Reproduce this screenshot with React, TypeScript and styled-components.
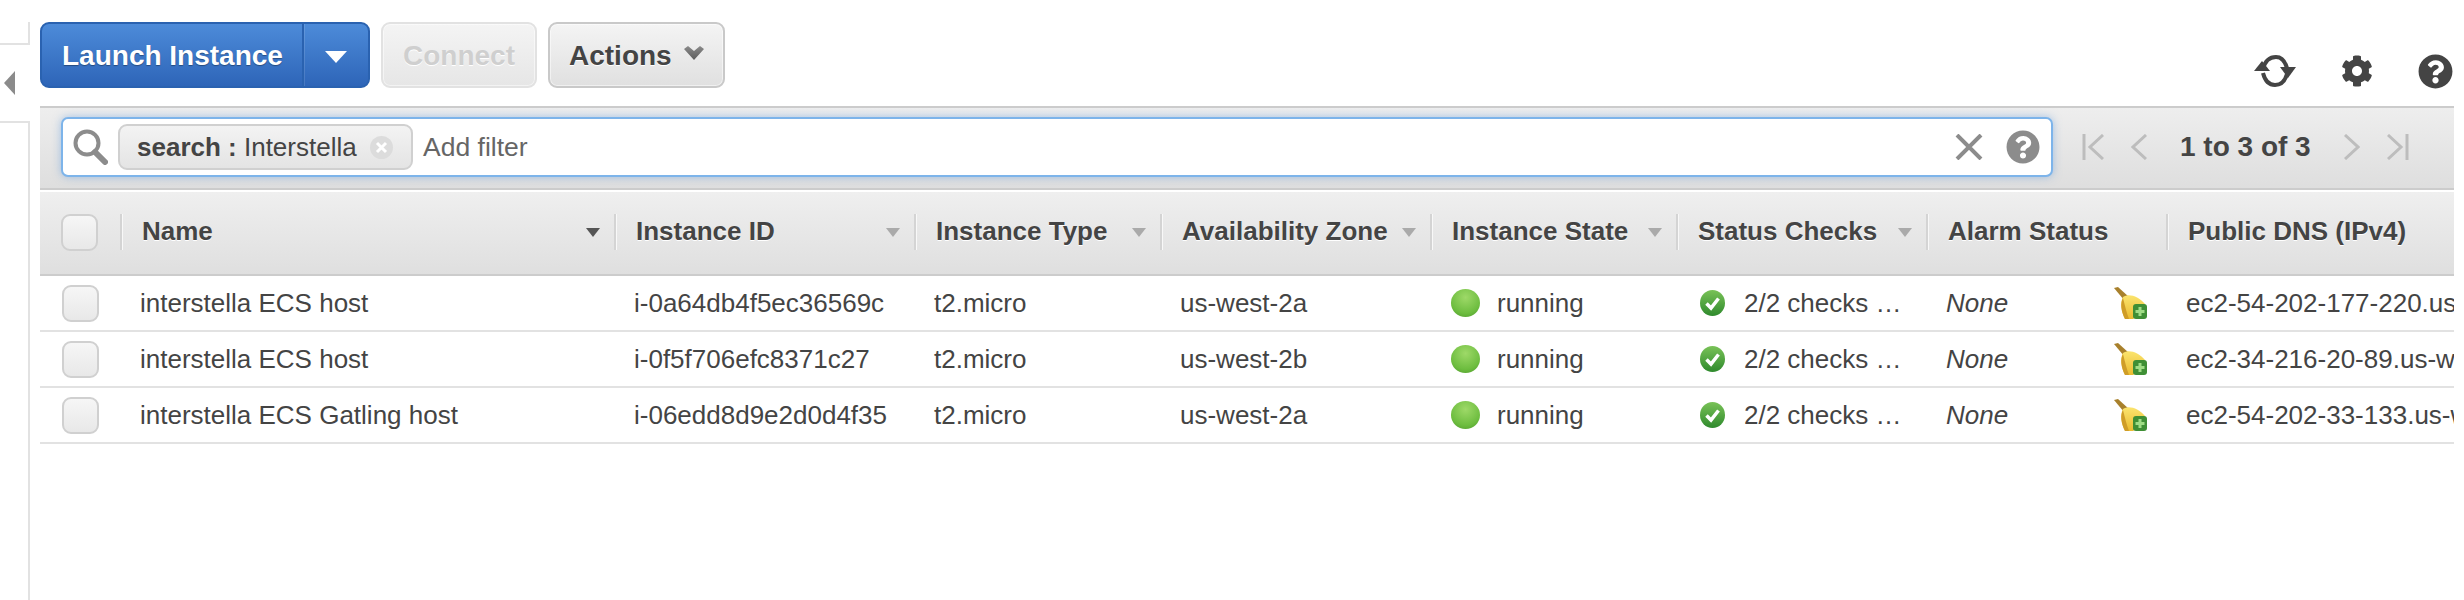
import React from "react";
import styled, { createGlobalStyle } from "styled-components";
import { FaCog, FaQuestionCircle } from "react-icons/fa";

const Global = createGlobalStyle`
  html, body { margin: 0; padding: 0; background: #fff; }
  body { font-family: "Liberation Sans", Arial, sans-serif; color: #444; overflow: hidden; }
`;

const Page = styled.div`
  display: flex;
  width: 2464px;
  height: 600px;
  overflow: hidden;
`;

const Side = styled.aside`
  display: flex;
  flex-direction: column;
  flex: 0 0 30px;
  padding-top: 22px;
  margin-right: 10px;
`;
const SideTop = styled.div`
  box-sizing: border-box;
  height: 23px;
  border-right: 2px solid #e2e2e2;
  border-bottom: 2px solid #e2e2e2;
`;
const SideHandle = styled.div`
  display: flex;
  align-items: center;
  height: 76px;
  padding-left: 4px;
`;
const SideArrow = styled.span`
  width: 0;
  height: 0;
  border-top: 12px solid transparent;
  border-bottom: 12px solid transparent;
  border-right: 11px solid #8b8b8b;
`;
const SideBottom = styled.div`
  flex: 1;
  border-top: 2px solid #e2e2e2;
  border-right: 2px solid #e2e2e2;
`;

const Main = styled.main`
  flex: 1;
  min-width: 0;
  padding: 22px 10px 0 0;
`;

const Toolbar = styled.div`
  display: flex;
  height: 66px;
  margin-bottom: 18px;
`;
const Split = styled.div`
  box-sizing: border-box;
  display: flex;
  width: 330px;
  margin-right: 11px;
  border: 2px solid #2a62b0;
  border-radius: 9px;
  background: linear-gradient(#4d8bd9, #2e65b8);
  overflow: hidden;
`;
const LaunchLabel = styled.div`
  flex: 0 0 262px;
  box-sizing: border-box;
  display: flex;
  align-items: center;
  padding: 2px 0 0 20px;
  font-size: 28px;
  font-weight: 700;
  color: #fff;
  text-shadow: 0 1px 1px rgba(0, 0, 0, 0.35);
  border-right: 2px solid #2a62b0;
  box-shadow: 1px 0 0 rgba(255, 255, 255, 0.12);
`;
const LaunchCaret = styled.div`
  flex: 1;
  display: flex;
  align-items: center;
  justify-content: center;
  padding-top: 3px;
  &::before {
    content: "";
    border-left: 11px solid transparent;
    border-right: 11px solid transparent;
    border-top: 12px solid #fff;
  }
`;
const Button = styled.div<{ $off?: boolean }>`
  box-sizing: border-box;
  display: flex;
  align-items: center;
  gap: 12px;
  padding: 2px ${(p) => (p.$off ? "20px" : "19px")} 0;
  margin-right: 11px;
  font-size: 28px;
  font-weight: 700;
  border-radius: 9px;
  border: 2px solid ${(p) => (p.$off ? "#e2e2e2" : "#c9c9c9")};
  color: ${(p) => (p.$off ? "#cfcfcf" : "#444")};
  background: ${(p) =>
    p.$off ? "linear-gradient(#f4f4f4, #e6e6e6)" : "linear-gradient(#f4f4f4, #e0e0e0)"};
  box-shadow: inset 0 0 0 1px rgba(255, 255, 255, 0.5);
  text-shadow: 0 1px 0 #fff;
`;
const ChevronSlot = styled.span`
  display: flex;
  margin-top: -6px;
`;
const TopIcons = styled.div`
  display: flex;
  align-items: center;
  gap: 45px;
  margin-left: auto;
  align-self: flex-end;
  height: 36px;
  margin-bottom: -1px;
  padding-right: 1px;
  color: #444;
`;

const FilterBar = styled.div`
  box-sizing: border-box;
  display: flex;
  align-items: center;
  height: 84px;
  padding: 0 0 2px 21px;
  border-top: 2px solid #cccccc;
  border-bottom: 2px solid #cccccc;
  background: linear-gradient(#eeeeee, #dedede);
`;
const SearchBox = styled.div`
  box-sizing: border-box;
  display: flex;
  align-items: center;
  width: 1992px;
  height: 60px;
  padding: 0 11px 0 9px;
  background: #fff;
  border: 2px solid #7db4ea;
  border-radius: 7px;
  box-shadow: 0 0 9px rgba(90, 150, 220, 0.5);
`;
const Chip = styled.div`
  box-sizing: border-box;
  display: flex;
  align-items: center;
  height: 46px;
  width: 295px;
  margin-left: 10px;
  padding-left: 17px;
  font-size: 26px;
  white-space: pre;
  border: 2px solid #d0d0d0;
  border-radius: 9px;
  background: linear-gradient(#f3f3f3, #e4e4e4);
`;
const ChipKey = styled.b`
  font-weight: 700;
`;
const ChipClose = styled.span`
  display: flex;
  margin-left: 13px;
`;
const Placeholder = styled.span`
  margin-left: 10px;
  font-size: 26.5px;
  color: #666;
`;
const BoxTools = styled.div`
  display: flex;
  align-items: center;
  gap: 23px;
  margin-left: auto;
  color: #8c8c8c;
`;
const Pager = styled.div`
  display: flex;
  align-items: center;
  gap: 27px;
  margin-left: 29px;
  color: #bdbdbd;
`;
const PagerText = styled.span`
  margin: 0 6px;
  font-size: 28px;
  font-weight: 700;
  color: #444;
  white-space: nowrap;
`;

const COLS = "80px 494px 300px 246px 270px 246px 250px 240px 288px";

const Table = styled.div`
  margin-top: 2px;
`;
const HeadRow = styled.div`
  display: grid;
  grid-template-columns: ${COLS};
  height: 84px;
  box-sizing: border-box;
  border-bottom: 2px solid #cccccc;
  background: linear-gradient(#efefef, #dfdfdf);
`;
const HeadCell = styled.div`
  box-sizing: border-box;
  display: flex;
  align-items: center;
  justify-content: space-between;
  height: 36px;
  margin-top: 22px;
  padding: 0 14px 2px 20px;
  border-left: 2px solid #d4d4d4;
  box-shadow: inset 1px 0 0 #f8f8f8;
  font-size: 26px;
  font-weight: 700;
  white-space: nowrap;
  text-shadow: 0 1px 0 #fff;
`;
const HeadCheck = styled.div`
  display: flex;
  align-items: center;
  height: 36px;
  margin-top: 22px;
  padding-left: 21px;
`;
const Sort = styled.span<{ $dark?: boolean }>`
  margin-top: 2px;
  border-left: 7px solid transparent;
  border-right: 7px solid transparent;
  border-top: 9px solid ${(p) => (p.$dark ? "#555" : "#aaa")};
`;
const Row = styled.div`
  display: grid;
  grid-template-columns: ${COLS};
  height: 56px;
  box-sizing: border-box;
  border-bottom: 2px solid #e2e2e2;
`;
const Cell = styled.div<{ $italic?: boolean }>`
  display: flex;
  align-items: center;
  min-width: 0;
  padding-left: 20px;
  font-size: 26px;
  font-style: ${(p) => (p.$italic ? "italic" : "normal")};
  white-space: nowrap;
  overflow: hidden;
`;
const CheckCell = styled.div`
  display: flex;
  align-items: center;
  padding-left: 22px;
`;
const Checkbox = styled.span`
  box-sizing: border-box;
  display: block;
  width: 37px;
  height: 37px;
  border: 2px solid #d0d0d0;
  border-radius: 9px;
  background: linear-gradient(#f6f6f6, #e8e8e8);
`;
const Dot = styled.span`
  flex: none;
  width: 29px;
  height: 28px;
  margin: 0 17px 0 1px;
  border-radius: 50%;
  background: radial-gradient(circle at 50% 30%, #9ed968, #6dbd3f 65%, #4b962a);
`;
const AlarmCell = styled(Cell)`
  justify-content: space-between;
  padding-right: 19px;
`;
const CheckWrap = styled.span`
  display: flex;
  flex: none;
  margin: 0 19px 0 4px;
`;

const Refresh = () => (
  <svg width="42" height="34" viewBox="0 0 42 34" fill="none">
    <path d="M9 15C11 7 16 3 22 3C27 3 31 7 33 14" stroke="#444" strokeWidth="4" />
    <path d="M33 20C31 27 27 31 21 31C15 31 11 27 9 19" stroke="#444" strokeWidth="4" />
    <path d="M0 17H16L8 7Z" fill="#444" />
    <path d="M26 13H42L34 24Z" fill="#444" />
  </svg>
);
const Magnifier = () => (
  <svg width="36" height="36" viewBox="0 0 36 36" fill="none">
    <circle cx="15" cy="14" r="11.5" stroke="#8c8c8c" strokeWidth="4" />
    <path d="M23 23L33 33" stroke="#8c8c8c" strokeWidth="6" strokeLinecap="round" />
  </svg>
);
const ChipX = () => (
  <svg width="23" height="23" viewBox="0 0 23 23">
    <circle cx="11.5" cy="11.5" r="11.5" fill="#dcdcdc" />
    <path d="M7 7L16 16M16 7L7 16" stroke="#fff" strokeWidth="3" />
  </svg>
);
const ClearX = () => (
  <svg width="28" height="26" viewBox="0 0 28 26" fill="none">
    <path d="M2 1L26 25M26 1L2 25" stroke="#8c8c8c" strokeWidth="4" />
  </svg>
);
const First = () => (
  <svg width="22" height="26" viewBox="0 0 22 26" fill="none" stroke="currentColor" strokeWidth="3">
    <path d="M2 0V26M21 1L8 13L21 25" />
  </svg>
);
const Prev = () => (
  <svg width="16" height="26" viewBox="0 0 16 26" fill="none" stroke="currentColor" strokeWidth="3">
    <path d="M15 1L2 13L15 25" />
  </svg>
);
const Next = () => (
  <svg width="16" height="26" viewBox="0 0 16 26" fill="none" stroke="currentColor" strokeWidth="3">
    <path d="M1 1L14 13L1 25" />
  </svg>
);
const Last = () => (
  <svg width="22" height="26" viewBox="0 0 22 26" fill="none" stroke="currentColor" strokeWidth="3">
    <path d="M20 0V26M1 1L14 13L1 25" />
  </svg>
);
const ActionsChevron = () => (
  <svg width="20" height="14" viewBox="0 0 20 14">
    <defs>
      <linearGradient id="chev" x1="0" y1="0" x2="0" y2="1">
        <stop offset="0" stopColor="#8a8a8a" />
        <stop offset="1" stopColor="#5c5c5c" />
      </linearGradient>
    </defs>
    <path d="M0 3L4 0L10 5L16 0L20 3L10 14Z" fill="url(#chev)" />
  </svg>
);
const CheckIcon = () => (
  <svg width="25" height="26" viewBox="0 0 25 26">
    <defs>
      <linearGradient id="chk" x1="0" y1="0" x2="0" y2="1">
        <stop offset="0" stopColor="#79c257" />
        <stop offset="1" stopColor="#2f8a2d" />
      </linearGradient>
    </defs>
    <ellipse cx="12.5" cy="13" rx="12.5" ry="13" fill="url(#chk)" />
    <path d="M6.5 13.5L11 18L18.5 8.5" fill="none" stroke="#fff" strokeWidth="3.5" />
  </svg>
);
const Broom = () => (
  <svg width="33" height="32" viewBox="0 0 33 32">
    <defs>
      <linearGradient id="bristle" x1="0" y1="0" x2="0" y2="1">
        <stop offset="0" stopColor="#fbe46e" />
        <stop offset="1" stopColor="#eabb30" />
      </linearGradient>
    </defs>
    <path d="M0 1L4 0L15 10L10 13Z" fill="#a8802c" />
    <path d="M9 10C15 6 24 9 31 17L27 27L19 32H11C7 24 6 15 9 10Z" fill="url(#bristle)" />
    <path d="M9 11C11 19 13 27 15 32H11C7 24 6 16 9 11Z" fill="#cf9d28" />
    <rect x="19" y="17" width="14" height="15" rx="3" fill="#3f8f35" />
    <path d="M26 20V29M21.5 24.5H30.5" stroke="#9fdc85" strokeWidth="3" />
  </svg>
);

const heads = [
  { label: "Name", sort: "dark" },
  { label: "Instance ID", sort: "light" },
  { label: "Instance Type", sort: "light" },
  { label: "Availability Zone", sort: "light" },
  { label: "Instance State", sort: "light" },
  { label: "Status Checks", sort: "light" },
  { label: "Alarm Status" },
  { label: "Public DNS (IPv4)" },
];

const rows = [
  ["interstella ECS host", "i-0a64db4f5ec36569c", "us-west-2a", "ec2-54-202-177-220.us-west-2.compute.amazonaws.com"],
  ["interstella ECS host", "i-0f5f706efc8371c27", "us-west-2b", "ec2-34-216-20-89.us-west-2.compute.amazonaws.com"],
  ["interstella ECS Gatling host", "i-06edd8d9e2d0d4f35", "us-west-2a", "ec2-54-202-33-133.us-west-2.compute.amazonaws.com"],
];

export default function App() {
  return (
    <Page>
      <Global />
      <Side>
        <SideTop />
        <SideHandle>
          <SideArrow />
        </SideHandle>
        <SideBottom />
      </Side>
      <Main>
        <Toolbar>
          <Split>
            <LaunchLabel>Launch Instance</LaunchLabel>
            <LaunchCaret />
          </Split>
          <Button $off>Connect</Button>
          <Button>
            Actions
            <ChevronSlot>
              <ActionsChevron />
            </ChevronSlot>
          </Button>
          <TopIcons>
            <Refresh />
            <FaCog size={32} />
            <FaQuestionCircle size={35} />
          </TopIcons>
        </Toolbar>
        <FilterBar>
          <SearchBox>
            <Magnifier />
            <Chip>
              <ChipKey>search :</ChipKey> Interstella
              <ChipClose>
                <ChipX />
              </ChipClose>
            </Chip>
            <Placeholder>Add filter</Placeholder>
            <BoxTools>
              <ClearX />
              <FaQuestionCircle size={34} />
            </BoxTools>
          </SearchBox>
          <Pager>
            <First />
            <Prev />
            <PagerText>1 to 3 of 3</PagerText>
            <Next />
            <Last />
          </Pager>
        </FilterBar>
        <Table>
          <HeadRow>
            <HeadCheck>
              <Checkbox />
            </HeadCheck>
            {heads.map((h) => (
              <HeadCell key={h.label}>
                {h.label}
                {h.sort && <Sort $dark={h.sort === "dark"} />}
              </HeadCell>
            ))}
          </HeadRow>
          {rows.map((r) => (
            <Row key={r[1]}>
              <CheckCell>
                <Checkbox />
              </CheckCell>
              <Cell>{r[0]}</Cell>
              <Cell>{r[1]}</Cell>
              <Cell>t2.micro</Cell>
              <Cell>{r[2]}</Cell>
              <Cell>
                <Dot />
                running
              </Cell>
              <Cell>
                <CheckWrap>
                  <CheckIcon />
                </CheckWrap>
                2/2 checks …
              </Cell>
              <AlarmCell $italic>
                None
                <Broom />
              </AlarmCell>
              <Cell>{r[3]}</Cell>
            </Row>
          ))}
        </Table>
      </Main>
    </Page>
  );
}
